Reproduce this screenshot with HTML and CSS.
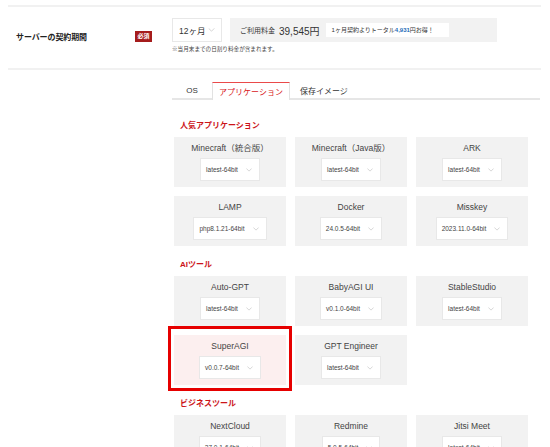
FILE: index.html
```html
<!DOCTYPE html>
<html lang="ja">
<head>
<meta charset="utf-8">
<link rel="stylesheet" href="styles.css">
</head>
<body>
<div class="page">
  <div class="contract">
    <div class="label-col">
      <span class="label">サーバーの契約期間</span>
      <span class="badge">必須</span>
    </div>
    <div class="field-col">
      <div class="field-row">
        <div class="sel-main">12ヶ月<svg class="chev" viewBox="0 0 8 5" width="7" height="4"><polyline points="0.5,0.5 4,4 7.5,0.5"/></svg></div>
        <div class="price">
          <span class="price-label">ご利用料金</span>
          <span class="price-val">39,545円</span>
          <span class="deal">1ヶ月契約よりトータル<b>4,931</b>円お得！</span>
        </div>
      </div>
      <div class="note">※当月末までの日割り料金が含まれます。</div>
    </div>
  </div>

  <div class="tabs">
    <div class="tab tab-os">OS</div>
    <div class="tab tab-active">アプリケーション</div>
    <div class="tab tab-rest">保存イメージ</div>
  </div>

  <div class="apps">
    <div class="sec-title">人気アプリケーション</div>
    <div class="grid">
      <div class="card"><div class="c-title">Minecraft（統合版）</div><div class="sel">latest-64bit<svg class="chev" viewBox="0 0 8 5" width="6" height="4"><polyline points="0.5,0.5 4,4 7.5,0.5"/></svg></div></div>
      <div class="card"><div class="c-title">Minecraft（Java版）</div><div class="sel">latest-64bit<svg class="chev" viewBox="0 0 8 5" width="6" height="4"><polyline points="0.5,0.5 4,4 7.5,0.5"/></svg></div></div>
      <div class="card"><div class="c-title">ARK</div><div class="sel">latest-64bit<svg class="chev" viewBox="0 0 8 5" width="6" height="4"><polyline points="0.5,0.5 4,4 7.5,0.5"/></svg></div></div>
      <div class="card"><div class="c-title">LAMP</div><div class="sel">php8.1.21-64bit<svg class="chev" viewBox="0 0 8 5" width="6" height="4"><polyline points="0.5,0.5 4,4 7.5,0.5"/></svg></div></div>
      <div class="card"><div class="c-title">Docker</div><div class="sel">24.0.5-64bit<svg class="chev" viewBox="0 0 8 5" width="6" height="4"><polyline points="0.5,0.5 4,4 7.5,0.5"/></svg></div></div>
      <div class="card"><div class="c-title">Misskey</div><div class="sel">2023.11.0-64bit<svg class="chev" viewBox="0 0 8 5" width="6" height="4"><polyline points="0.5,0.5 4,4 7.5,0.5"/></svg></div></div>
    </div>

    <div class="sec-title">AIツール</div>
    <div class="grid">
      <div class="card"><div class="c-title">Auto-GPT</div><div class="sel">latest-64bit<svg class="chev" viewBox="0 0 8 5" width="6" height="4"><polyline points="0.5,0.5 4,4 7.5,0.5"/></svg></div></div>
      <div class="card"><div class="c-title">BabyAGI UI</div><div class="sel">v0.1.0-64bit<svg class="chev" viewBox="0 0 8 5" width="6" height="4"><polyline points="0.5,0.5 4,4 7.5,0.5"/></svg></div></div>
      <div class="card"><div class="c-title">StableStudio</div><div class="sel">latest-64bit<svg class="chev" viewBox="0 0 8 5" width="6" height="4"><polyline points="0.5,0.5 4,4 7.5,0.5"/></svg></div></div>
      <div class="card card-selected"><div class="c-title">SuperAGI</div><div class="sel">v0.0.7-64bit<svg class="chev" viewBox="0 0 8 5" width="6" height="4"><polyline points="0.5,0.5 4,4 7.5,0.5"/></svg></div><div class="highlight"></div></div>
      <div class="card"><div class="c-title">GPT Engineer</div><div class="sel">latest-64bit<svg class="chev" viewBox="0 0 8 5" width="6" height="4"><polyline points="0.5,0.5 4,4 7.5,0.5"/></svg></div></div>
    </div>

    <div class="sec-title">ビジネスツール</div>
    <div class="grid">
      <div class="card"><div class="c-title">NextCloud</div><div class="sel">27.0.1-64bit<svg class="chev" viewBox="0 0 8 5" width="6" height="4"><polyline points="0.5,0.5 4,4 7.5,0.5"/></svg></div></div>
      <div class="card"><div class="c-title">Redmine</div><div class="sel">5.0.5-64bit<svg class="chev" viewBox="0 0 8 5" width="6" height="4"><polyline points="0.5,0.5 4,4 7.5,0.5"/></svg></div></div>
      <div class="card"><div class="c-title">Jitsi Meet</div><div class="sel">latest-64bit<svg class="chev" viewBox="0 0 8 5" width="6" height="4"><polyline points="0.5,0.5 4,4 7.5,0.5"/></svg></div></div>
    </div>
  </div>
</div>
</body>
</html>
```

FILE: styles.css
```css
html, body {
  margin: 0;
  padding: 0;
  background: #fff;
}
body {
  font-family: "Liberation Sans", "Noto Sans CJK JP", sans-serif;
  color: #333;
  width: 550px;
  height: 447px;
  overflow: hidden;
}
.page {
  padding-top: 5px;
  margin-left: 8px;
  width: 533px;
}
.contract {
  display: flex;
  border-top: 2px solid #f1f1f1;
  border-bottom: 2px solid #f1f1f1;
  padding: 11px 0 15px;
}
.label-col {
  width: 164px;
  box-sizing: border-box;
  padding: 1px 20px 0 8px;
  display: flex;
  align-items: center;
  justify-content: space-between;
}
.label {
  font-size: 8px;
  font-weight: bold;
  color: #222;
  letter-spacing: -0.1px;
}
.badge {
  background: #a51c1c;
  color: #fff;
  font-size: 6px;
  font-weight: bold;
  width: 17px;
  height: 11px;
  line-height: 11px;
  text-align: center;
  margin-top: 1px;
}
.field-row {
  display: flex;
  gap: 8px;
}
.sel-main {
  width: 50px;
  height: 24px;
  box-sizing: border-box;
  border: 1px solid #e8e8e8;
  background: #fff;
  display: flex;
  align-items: center;
  justify-content: space-between;
  padding: 0 6px 0 6px;
  font-size: 8.5px;
  color: #333;
}
.chev {
  fill: none;
  stroke: #c4c4c4;
  stroke-width: 0.9;
  flex: none;
}
.price {
  width: 267px;
  height: 24px;
  background: #f2f2f2;
  display: flex;
  align-items: center;
  padding-left: 10px;
  box-sizing: border-box;
}
.price-label {
  font-size: 7px;
  color: #333;
}
.price-val {
  font-size: 10px;
  color: #333;
  margin-left: 4px;
}
.deal {
  background: #fff;
  height: 14px;
  line-height: 14px;
  font-size: 6px;
  color: #333;
  padding: 0 7px 0 6px;
  margin-left: 6px;
  width: 123px;
  box-sizing: border-box;
  white-space: nowrap;
}
.deal b {
  color: #1b6bb8;
}
.note {
  font-size: 5.6px;
  color: #444;
  margin-top: 3px;
}
.tabs {
  display: flex;
  margin: 12px 0 0 164px;
  width: 368px;
  height: 18px;
  font-size: 8px;
}
.tab {
  display: flex;
  align-items: center;
  box-sizing: border-box;
}
.tab-os {
  width: 40px;
  justify-content: center;
  border-bottom: 2px solid #e6e6e6;
  padding-top: 1px;
}
.tab-active {
  width: 78px;
  justify-content: center;
  color: #d8161b;
  border-top: 1px solid #ea4a4a;
  border-left: 1px solid #e2e2e2;
  border-right: 1px solid #e2e2e2;
}
.tab-rest {
  flex: 1;
  padding-left: 10px;
  padding-top: 1px;
  border-bottom: 2px solid #e6e6e6;
}
.apps {
  padding: 20px 0 0 166px;
}
.sec-title {
  font-size: 8px;
  font-weight: bold;
  color: #cc1419;
  height: 12px;
  line-height: 12px;
  padding-left: 6px;
  margin-bottom: 5px;
}
.grid {
  display: grid;
  grid-template-columns: repeat(3, 112px);
  gap: 9px;
  margin-bottom: 13px;
}
.card {
  position: relative;
  height: 50px;
  background: #f2f2f2;
  display: flex;
  flex-direction: column;
  align-items: center;
  padding-top: 5px;
  box-sizing: border-box;
}
.card-selected {
  background: #fcefef;
}
.c-title {
  font-size: 8.5px;
  line-height: 12px;
  color: #444;
}
.sel {
  margin-top: 4px;
  height: 23px;
  box-sizing: border-box;
  background: #fff;
  border: 1px solid #e8e8e8;
  display: flex;
  align-items: center;
  gap: 8px;
  padding: 0 7px 0 5px;
  font-size: 6.5px;
  color: #444;
  white-space: nowrap;
}
.highlight {
  position: absolute;
  top: -9px;
  left: -6px;
  right: -6px;
  bottom: -6px;
  border: 3px solid #e60000;
  pointer-events: none;
}
```
